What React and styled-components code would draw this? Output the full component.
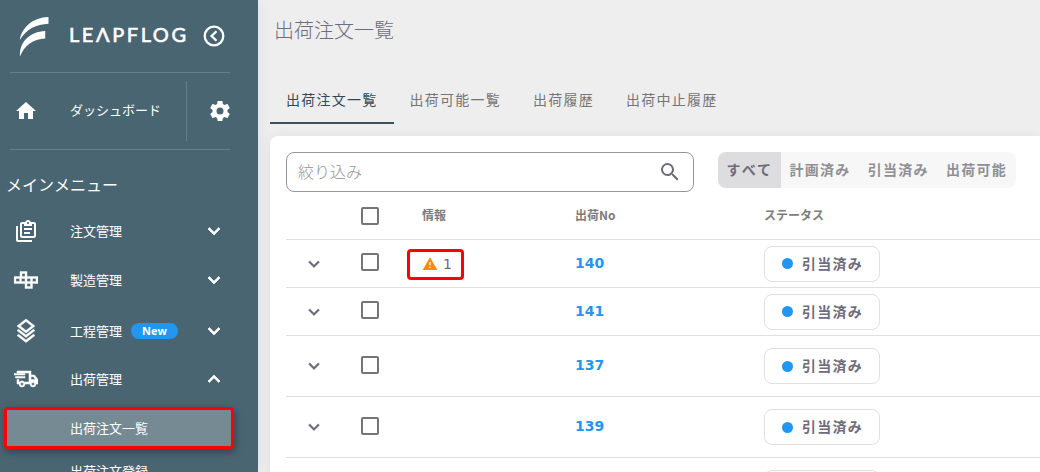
import React from "react";
import styled, { createGlobalStyle, css } from "styled-components";

const GlobalStyle = createGlobalStyle`
  * {
    box-sizing: border-box;
  }
  body {
    margin: 0;
    overflow: hidden;
    font-family: "Noto Sans CJK JP", sans-serif;
    font-kerning: none;
    background: #eeeeee;
  }
`;

const paths = {
  home: "M10,20V14H14V20H19V12H22L12,3L2,12H5V20H10Z",
  cog:
    "M12,15.5A3.5,3.5 0 0,1 8.5,12A3.5,3.5 0 0,1 12,8.5A3.5,3.5 0 0,1 15.5,12A3.5,3.5 0 0,1 12,15.5M19.43,12.97C19.47,12.65 19.5,12.33 19.5,12C19.5,11.67 19.47,11.34 19.43,11L21.54,9.37C21.73,9.22 21.78,8.95 21.66,8.73L19.66,5.27C19.54,5.05 19.27,4.96 19.05,5.05L16.56,6.05C16.04,5.66 15.5,5.32 14.87,5.07L14.5,2.42C14.46,2.18 14.25,2 14,2H10C9.75,2 9.54,2.18 9.5,2.42L9.13,5.07C8.5,5.32 7.96,5.66 7.44,6.05L4.95,5.05C4.73,4.96 4.46,5.05 4.34,5.27L2.34,8.73C2.21,8.95 2.27,9.22 2.46,9.37L4.57,11C4.53,11.34 4.5,11.67 4.5,12C4.5,12.33 4.53,12.65 4.57,12.97L2.46,14.63C2.27,14.78 2.21,15.05 2.34,15.27L4.34,18.73C4.46,18.95 4.73,19.03 4.95,18.95L7.44,17.94C7.96,18.34 8.5,18.68 9.13,18.93L9.5,21.58C9.54,21.82 9.75,22 10,22H14C14.25,22 14.46,21.82 14.5,21.58L14.87,18.93C15.5,18.67 16.04,18.34 16.56,17.94L19.05,18.95C19.27,19.03 19.54,18.95 19.66,18.73L21.66,15.27C21.78,15.05 21.73,14.78 21.54,14.63L19.43,12.97Z",
  chevron: "M7.41,8.58L12,13.17L16.59,8.58L18,10L12,16L6,10L7.41,8.58Z",
  search:
    "M9.5,3A6.5,6.5 0 0,1 16,9.5C16,11.11 15.41,12.59 14.44,13.73L14.71,14H15.5L20.5,19L19,20.5L14,15.5V14.71L13.73,14.44C12.59,15.41 11.11,16 9.5,16A6.5,6.5 0 0,1 3,9.5A6.5,6.5 0 0,1 9.5,3M9.5,5C7,5 5,7 5,9.5C5,12 7,14 9.5,14C12,14 14,12 14,9.5C14,7 12,5 9.5,5Z",
  checkbox:
    "M19,3H5C3.89,3 3,3.89 3,5V19A2,2 0 0,0 5,21H19A2,2 0 0,0 21,19V5C21,3.89 20.1,3 19,3M19,5V19H5V5H19Z",
  alert: "M13 14H11V9H13M13 18H11V16H13M1 21H23L12 2L1 21Z",
  layers:
    "M12,0L3,7L4.63,8.27L12,14L19.36,8.27L21,7L12,0M12,2.53L17.74,7L12,11.47L6.26,7L12,2.53M3,11.5L4.63,10.23L12,15.97L19.37,10.24L21,11.5L12,18.5L3,11.5M3,16.5L4.62,15.24L12,20.97L19.37,15.24L21,16.5L12,23.5L3,16.5Z",
  orders:
    "M4,7V21H18V23H4C2.9,23 2,22.1 2,21V7H4M20,3C21.1,3 22,3.9 22,5V17C22,18.1 21.1,19 20,19H8C6.9,19 6,18.1 6,17V5C6,3.9 6.9,3 8,3H11.18C11.6,1.84 12.7,1 14,1C15.3,1 16.4,1.84 16.82,3H20M14,3C13.45,3 13,3.45 13,4C13,4.55 13.45,5 14,5C14.55,5 15,4.55 15,4C15,3.45 14.55,3 14,3M10,7V5H8V17H20V5H18V7H10M10,9H18V11H10V9M10,13H16V15H10V13Z",
  blocks:
    "M6,3.5H13V8.5H24V15.5H18.5V20.5H11V15.5H0V8.5H6V3.5M8,5.5V8.5H11V5.5H8M2,10.5V13.5H5.5V10.5H2M7.5,10.5V13.5H11V10.5H7.5M13,10.5V13.5H16.5V10.5H13M18.5,10.5V13.5H22V10.5H18.5M13,15.5V18.5H16.5V15.5H13Z",
  truck:
    "M3,4H17V8H20.5L24,12.5V17H22A3,3 0 0,1 16,17H11A3,3 0 0,1 5,17H3V12.5H5V15H5.8A3,3 0 0,1 10.2,15H15V6H3V4M17,9.7V12.5H21.5L19.5,9.7H17M8,15.5A1.5,1.5 0 1,0 8,18.5A1.5,1.5 0 1,0 8,15.5M19,15.5A1.5,1.5 0 1,0 19,18.5A1.5,1.5 0 1,0 19,15.5M0,6.5H11V8H0V6.5M1.5,9.5H11V11H1.5V9.5Z"
};

const Icon = ({ name, size = 24, color = "#ffffff", flip, bold = 0 }) => (
  <Svg
    viewBox="0 0 24 24"
    $size={size}
    $color={color}
    $flip={flip}
    $bold={bold}
  >
    <path d={paths[name]} fillRule="evenodd" />
  </Svg>
);

const menu = [
  { icon: "orders", label: "注文管理", height: 48 },
  { icon: "blocks", label: "製造管理", height: 50, bold: 0.4 },
  { icon: "layers", label: "工程管理", height: 52, isNew: true, bold: 0.5 },
  { icon: "truck", label: "出荷管理", height: 44, open: true, bold: 0.5 }
];

const tabs = ["出荷注文一覧", "出荷可能一覧", "出荷履歴", "出荷中止履歴"];
const filters = ["すべて", "計画済み", "引当済み", "出荷可能"];

const orders = [
  { no: "140", height: 48, alerts: 1, status: "引当済み" },
  { no: "141", height: 48, status: "引当済み" },
  { no: "137", height: 61, status: "引当済み" },
  { no: "139", height: 61, status: "引当済み" },
  { no: "", height: 61, status: "" }
];

const Sidebar = () => (
  <Aside>
    <Brand>
      <Mark viewBox="0 0 30 41">
        <path d="M29.5 1V7.800C17 8.500 8 12.500 0.800 24C3 11 14 1.500 29.500 1Z" />
        <path d="M26.200 15V22.500C14 23 5.500 29 1 40.500C0 26 11 15.500 26.200 15Z" />
      </Mark>
      <BrandName>LEΛPFLOG</BrandName>
      <Collapse viewBox="0 0 22 22">
        <circle cx="11" cy="11" r="9.300" />
        <path d="M13.500 6.200L8.600 11L13.500 15.800" />
      </Collapse>
    </Brand>
    <Dashboard>
      <IconSlot>
        <Icon name="home" />
      </IconSlot>
      <DashboardLabel>ダッシュボード</DashboardLabel>
      <Settings>
        <Icon name="cog" />
      </Settings>
    </Dashboard>
    <MenuTitle>メインメニュー</MenuTitle>
    {menu.map(item => (
      <MenuItem key={item.label} $height={item.height}>
        <IconSlot>
          <Icon name={item.icon} bold={item.bold} />
        </IconSlot>
        <MenuLabel>{item.label}</MenuLabel>
        {item.isNew && <Badge>New</Badge>}
        <Toggle>
          <Icon name="chevron" flip={item.open} bold={0.7} />
        </Toggle>
      </MenuItem>
    ))}
    <SubMenu>
      <SubItem $active>出荷注文一覧</SubItem>
      <SubItem>出荷注文登録</SubItem>
    </SubMenu>
  </Aside>
);

const Row = ({ order }) => (
  <TableRow $height={order.height}>
    <Expand>
      <Icon name="chevron" size={22} color="#6e6b7b" bold={0.3} />
    </Expand>
    <Check>
      <Icon name="checkbox" color="#757575" />
    </Check>
    <Info>
      {order.alerts && (
        <AlertBox>
          <Icon name="alert" size={16} color="#fb8c00" />
          {order.alerts}
        </AlertBox>
      )}
    </Info>
    <OrderNo>{order.no}</OrderNo>
    <div>
      <Status>
        <Dot />
        {order.status}
      </Status>
    </div>
  </TableRow>
);

const App = () => (
  <>
    <GlobalStyle />
    <Page>
      <Sidebar />
      <Main>
        <Title>出荷注文一覧</Title>
        <Tabs>
          {tabs.map((tab, i) => (
            <Tab key={tab} $active={i === 0}>
              {tab}
            </Tab>
          ))}
        </Tabs>
        <Card>
          <Toolbar>
            <SearchField>
              <Placeholder>絞り込み</Placeholder>
              <Icon name="search" color="#6e6b7b" />
            </SearchField>
            <FilterGroup>
              {filters.map((filter, i) => (
                <Filter key={filter} $active={i === 0}>
                  {filter}
                </Filter>
              ))}
            </FilterGroup>
          </Toolbar>
          <TableHead>
            <span />
            <Icon name="checkbox" color="#757575" />
            <HeadCell>情報</HeadCell>
            <HeadCell>出荷No</HeadCell>
            <HeadCell>ステータス</HeadCell>
          </TableHead>
          {orders.map(order => (
            <Row key={order.no} order={order} />
          ))}
        </Card>
      </Main>
    </Page>
  </>
);

const Svg = styled.svg`
  display: block;
  flex: none;
  width: ${p => p.$size}px;
  height: ${p => p.$size}px;
  fill: ${p => p.$color};
  stroke: ${p => p.$color};
  stroke-width: ${p => p.$bold};
  transform: ${p => (p.$flip ? "rotate(180deg)" : "none")};
`;

const Page = styled.div`
  display: flex;
  height: 472px;
  overflow: hidden;
`;

const Aside = styled.aside`
  flex: 0 0 258px;
  background: #4a6572;
  color: #ffffff;
  box-shadow: 0 0 14px rgba(0, 0, 0, 0.07);
`;

const Brand = styled.div`
  display: flex;
  align-items: center;
  height: 73px;
  margin: 0 28px 0 10px;
  padding-left: 9px;
  border-bottom: 1px solid #64808c;
`;

const Mark = styled.svg`
  width: 30px;
  height: 41px;
  fill: #ffffff;
`;

const BrandName = styled.div`
  width: 134px;
  margin: -5px 0 0 20px;
  font: 400 20px/24px Lato, sans-serif;
  letter-spacing: 2.6px;
  white-space: nowrap;
  -webkit-text-stroke: 0.6px #ffffff;
`;

const Collapse = styled.svg`
  width: 22px;
  height: 22px;
  fill: none;
  stroke: #ffffff;
  stroke-width: 2.3;
`;

const Dashboard = styled.div`
  display: flex;
  align-items: center;
  height: 77px;
  margin: 0 28px 0 10px;
  border-bottom: 1px solid #64808c;
`;

const IconSlot = styled.div`
  width: 56px;
  padding-left: 4px;
`;

const DashboardLabel = styled.div`
  flex: 1;
  margin-left: 4px;
  padding-bottom: 4px;
  font-size: 13px;
`;

const Settings = styled.div`
  display: flex;
  align-items: center;
  justify-content: flex-end;
  width: 46px;
  height: 60px;
  margin-right: -2px;
  border-left: 1px solid #64808c;
`;

const MenuTitle = styled.div`
  height: 57px;
  padding: 22px 0 0 6px;
  font-size: 16px;
  line-height: 24px;
`;

const MenuItem = styled.div`
  display: flex;
  align-items: center;
  height: ${p => p.$height}px;
  padding: 0 32px 0 10px;
`;

const MenuLabel = styled.div`
  margin-left: 4px;
  padding-bottom: 2px;
  font-size: 13px;
`;

const Badge = styled.div`
  width: 47px;
  height: 16px;
  margin-left: 9px;
  border-radius: 8px;
  background: #2196f3;
  font: 700 11px/15px "Open Sans", sans-serif;
  text-align: center;
`;

const Toggle = styled.div`
  margin-left: auto;
`;

const SubMenu = styled.div`
  padding: 6px 4px 0;
`;

const SubItem = styled.div`
  display: flex;
  align-items: center;
  width: 230px;
  height: 42px;
  margin-bottom: 1px;
  padding: 0 0 2px 66px;
  font-size: 13px;
  ${p =>
    p.$active &&
    css`
      padding-left: 63px;
      border: 3px solid #ff0000;
      border-radius: 4px;
      background: #768a94;
      box-shadow: 1px 3px 8px rgba(0, 0, 0, 0.35);
    `}
`;

const Main = styled.main`
  flex: 1;
  min-width: 0;
  padding-left: 12px;
`;

const Title = styled.h1`
  margin: 0;
  height: 76px;
  padding: 15px 0 0 4px;
  color: #6e6b7b;
  font-size: 20px;
  font-weight: 300;
  line-height: 30px;
`;

const Tabs = styled.nav`
  display: flex;
  height: 48px;
`;

const Tab = styled.div`
  padding: 0 16px;
  border-bottom: 2px solid ${p => (p.$active ? "#3b515c" : "transparent")};
  color: ${p => (p.$active ? "#344955" : "#757575")};
  font-size: 14px;
  letter-spacing: 1.25px;
  line-height: 46px;
`;

const Card = styled.section`
  height: 400px;
  margin-top: 12px;
  padding: 16px 0 0 16px;
  border-radius: 8px 0 0 0;
  background: #ffffff;
  box-shadow: 0 0 12px rgba(0, 0, 0, 0.06);
`;

const Toolbar = styled.div`
  display: flex;
  align-items: flex-start;
  height: 40px;
`;

const SearchField = styled.div`
  display: flex;
  align-items: center;
  justify-content: space-between;
  width: 408px;
  height: 40px;
  padding: 0 11px;
  border: 1px solid #96949e;
  border-radius: 8px;
`;

const Placeholder = styled.span`
  padding-bottom: 3px;
  color: #939393;
  font-size: 16px;
  font-weight: 300;
`;

const FilterGroup = styled.div`
  display: flex;
  margin-left: 24px;
  overflow: hidden;
  border-radius: 8px;
`;

const Filter = styled.div`
  height: 36px;
  padding: 0 8.6px;
  background: ${p => (p.$active ? "#dddde0" : "#f7f7f7")};
  color: ${p => (p.$active ? "#6e6b7b" : "#8f8f96")};
  font-size: 14px;
  font-weight: 700;
  letter-spacing: 1.25px;
  line-height: 34px;
`;

const columns = css`
  display: grid;
  grid-template-columns: 72px 64px 153px 189px 1fr;
  align-items: center;
  border-bottom: 1px solid #e0e0e0;
`;

const TableHead = styled.div`
  ${columns}
  height: 48px;
`;

const HeadCell = styled.div`
  padding-bottom: 2px;
  color: #7c7c7c;
  font-size: 12px;
  font-weight: 700;
`;

const TableRow = styled.div`
  ${columns}
  height: ${p => p.$height}px;
`;

const Expand = styled.div`
  padding-left: 17px;
`;

const Check = styled.div`
  margin-top: -3px;
`;

const Info = styled.div`
  display: flex;
`;

const AlertBox = styled.div`
  display: flex;
  align-items: center;
  gap: 5px;
  width: 57px;
  height: 31px;
  margin: 1px 0 0 -15px;
  padding: 0 0 1px 12px;
  border: 3px solid #ff0000;
  border-radius: 4px;
  color: #6e6b7b;
  font: 400 14px "DejaVu Sans", sans-serif;
`;

const OrderNo = styled.div`
  padding-bottom: 2px;
  color: #2196f3;
  font: 700 14px "DejaVu Sans", sans-serif;
`;

const Status = styled.div`
  display: flex;
  align-items: center;
  width: 116px;
  height: 36px;
  padding: 0 0 2px 17px;
  border: 1px solid #e0e0e0;
  border-radius: 8px;
  color: #6e6b7b;
  font-size: 14px;
  font-weight: 700;
  letter-spacing: 1.25px;
`;

const Dot = styled.i`
  width: 11px;
  height: 11px;
  margin: 2px 9px 0 0;
  border-radius: 50%;
  background: #2196f3;
`;

export default App;
